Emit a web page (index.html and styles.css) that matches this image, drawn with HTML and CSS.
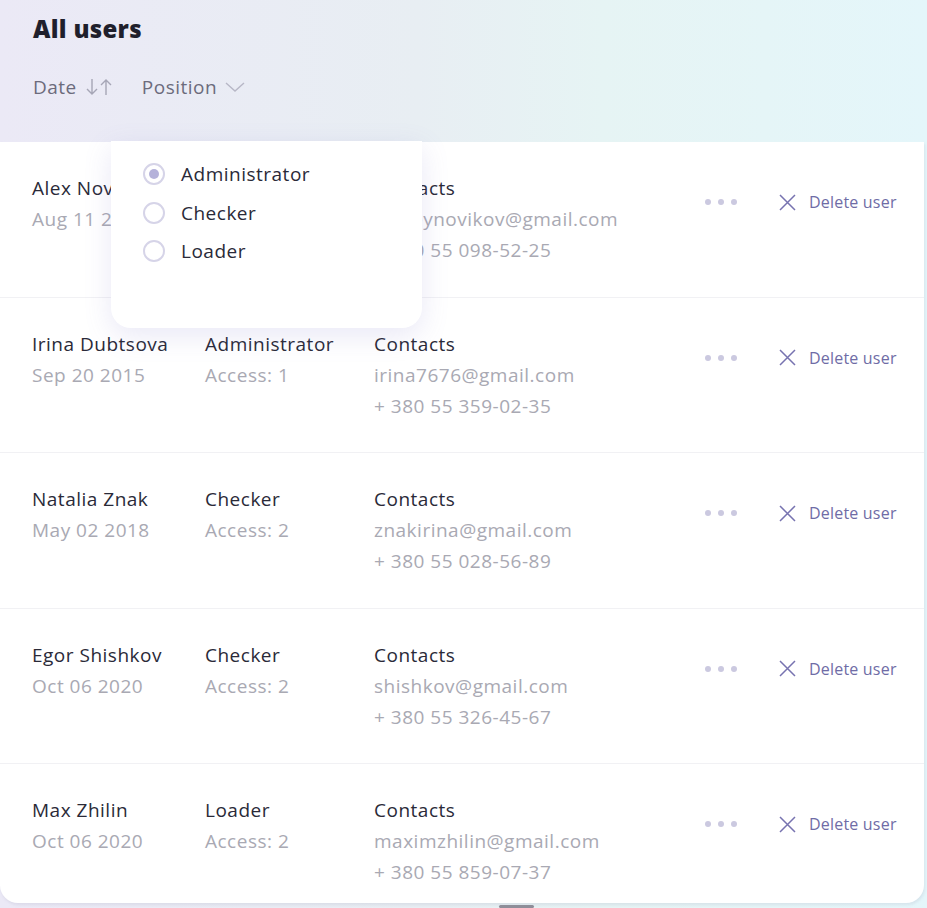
FILE: index.html
```html
<!DOCTYPE html>
<html>
<head>
<meta charset="utf-8">
<link rel="stylesheet" href="styles.css">
</head>
<body>
<div class="page">
  <header class="head">
    <h1 class="title">All users</h1>
    <div class="filters">
      <span class="filter">Date
        <svg class="sort" width="28" height="20" viewBox="0 0 28 20"><path d="M7 2v15M2 12l5 5 5-5" fill="none" stroke="#a6a6b6" stroke-width="1.4"/><path d="M21 18V3M16 8l5-5 5 5" fill="none" stroke="#a6a6b6" stroke-width="1.4"/></svg>
      </span>
      <span class="filter">Position
        <svg class="chev" width="20" height="12" viewBox="0 0 20 12"><path d="M1 2l9 8 9-8" fill="none" stroke="#b7b7c6" stroke-width="1.4"/></svg>
      </span>
    </div>
  </header>

  <div class="list">
    <div class="row">
      <div class="col c-name"><div class="main">Alex Novikov</div><div class="sub">Aug 11 2019</div></div>
      <div class="col c-pos"><div class="main">Administrator</div><div class="sub">Access: 1</div></div>
      <div class="col c-con"><div class="main">Contacts</div><div class="sub">alexeynovikov@gmail.com</div><div class="sub">+ 380 55 098-52-25</div></div>
      <div class="actions"><span class="dots"><i></i><i></i><i></i></span><span class="del"><svg width="17" height="17" viewBox="0 0 17 17"><path d="M1 1l15 15M16 1L1 16" stroke="#7773b0" stroke-width="1.5"/></svg>Delete user</span></div>
    </div>
    <div class="row">
      <div class="col c-name"><div class="main">Irina Dubtsova</div><div class="sub">Sep 20 2015</div></div>
      <div class="col c-pos"><div class="main">Administrator</div><div class="sub">Access: 1</div></div>
      <div class="col c-con"><div class="main">Contacts</div><div class="sub">irina7676@gmail.com</div><div class="sub">+ 380 55 359-02-35</div></div>
      <div class="actions"><span class="dots"><i></i><i></i><i></i></span><span class="del"><svg width="17" height="17" viewBox="0 0 17 17"><path d="M1 1l15 15M16 1L1 16" stroke="#7773b0" stroke-width="1.5"/></svg>Delete user</span></div>
    </div>
    <div class="row">
      <div class="col c-name"><div class="main">Natalia Znak</div><div class="sub">May 02 2018</div></div>
      <div class="col c-pos"><div class="main">Checker</div><div class="sub">Access: 2</div></div>
      <div class="col c-con"><div class="main">Contacts</div><div class="sub">znakirina@gmail.com</div><div class="sub">+ 380 55 028-56-89</div></div>
      <div class="actions"><span class="dots"><i></i><i></i><i></i></span><span class="del"><svg width="17" height="17" viewBox="0 0 17 17"><path d="M1 1l15 15M16 1L1 16" stroke="#7773b0" stroke-width="1.5"/></svg>Delete user</span></div>
    </div>
    <div class="row">
      <div class="col c-name"><div class="main">Egor Shishkov</div><div class="sub">Oct 06 2020</div></div>
      <div class="col c-pos"><div class="main">Checker</div><div class="sub">Access: 2</div></div>
      <div class="col c-con"><div class="main">Contacts</div><div class="sub">shishkov@gmail.com</div><div class="sub">+ 380 55 326-45-67</div></div>
      <div class="actions"><span class="dots"><i></i><i></i><i></i></span><span class="del"><svg width="17" height="17" viewBox="0 0 17 17"><path d="M1 1l15 15M16 1L1 16" stroke="#7773b0" stroke-width="1.5"/></svg>Delete user</span></div>
    </div>
    <div class="row last">
      <div class="col c-name"><div class="main">Max Zhilin</div><div class="sub">Oct 06 2020</div></div>
      <div class="col c-pos"><div class="main">Loader</div><div class="sub">Access: 2</div></div>
      <div class="col c-con"><div class="main">Contacts</div><div class="sub">maximzhilin@gmail.com</div><div class="sub">+ 380 55 859-07-37</div></div>
      <div class="actions"><span class="dots"><i></i><i></i><i></i></span><span class="del"><svg width="17" height="17" viewBox="0 0 17 17"><path d="M1 1l15 15M16 1L1 16" stroke="#7773b0" stroke-width="1.5"/></svg>Delete user</span></div>
    </div>
  </div>

  <div class="dropdown">
    <label class="opt"><span class="radio on"></span>Administrator</label>
    <label class="opt"><span class="radio"></span>Checker</label>
    <label class="opt"><span class="radio"></span>Loader</label>
  </div>
  <div class="handle"></div>
</div>
</body>
</html>
```

FILE: styles.css
```css
* { box-sizing: border-box; }
html, body { margin: 0; padding: 0; }
body {
  font-family: "Open Sans", "Noto Sans", sans-serif;
  background: #ecebf2;
  width: 927px;
  height: 908px;
  overflow: hidden;
}
.page {
  position: relative;
  height: 908px;
  background: linear-gradient(90deg, #ebe9f6 0%, #e8eef3 45%, #e6f4f4 65%, #e4f6fa 100%);
}
.head {
  height: 142px;
  padding: 14px 0 0 33px;
}
.title {
  margin: 0;
  font-size: 24px;
  font-weight: 800;
  color: #1f1f2c;
  line-height: 30px;
  letter-spacing: 0.3px;
}
.filters {
  display: flex;
  gap: 29px;
  margin-top: 28px;
}
.filter {
  display: flex;
  align-items: center;
  gap: 8px;
  font-size: 19px;
  letter-spacing: 0.5px;
  color: #6c6b7c;
  line-height: 30px;
}
.list {
  background: #fff;
  margin-right: 3px;
  border-radius: 0 0 18px 18px;
  box-shadow: 1px 2px 3px rgba(150,150,180,0.18);
  height: 761px;
  overflow: hidden;
}
.row {
  height: 155.5px;
  display: flex;
  align-items: flex-start;
  padding: 31px 0 0 32px;
  border-bottom: 1px solid #f1f1f4;
}
.row.last { border-bottom: 0; }
.col { line-height: 31px; font-size: 19px; letter-spacing: 0.5px; }
.c-name { width: 173px; }
.c-pos { width: 169px; }
.c-con { width: 320px; }
.main { color: #2a2a38; }
.sub { color: #a9a9b3; }
.actions {
  display: flex;
  align-items: center;
  margin-top: 16px;
  height: 26px;
}
.dots { display: flex; gap: 7px; margin-left: 11px; }
.dots i { width: 6px; height: 6px; border-radius: 50%; background: #cbc9e0; display: block; }
.del {
  display: flex;
  align-items: center;
  gap: 13px;
  margin-left: 42px;
  font-size: 16px;
  letter-spacing: 0.2px;
  color: #6f6ca6;
}
.dropdown {
  position: absolute;
  left: 111px;
  top: 141px;
  width: 311px;
  height: 187px;
  background: #fff;
  border-radius: 0 0 20px 20px;
  box-shadow: 0 8px 28px rgba(120, 110, 200, 0.16);
  padding: 14px 0 0 32px;
}
.opt {
  display: flex;
  align-items: center;
  gap: 16px;
  height: 38.5px;
  font-size: 19px;
  letter-spacing: 0.5px;
  color: #2a2a38;
}
.radio {
  width: 22px;
  height: 22px;
  border: 2px solid #d6d4e8;
  border-radius: 50%;
  display: flex;
  align-items: center;
  justify-content: center;
}
.radio.on::after {
  content: "";
  width: 10px;
  height: 10px;
  border-radius: 50%;
  background: #b5b2da;
}
.handle {
  position: absolute;
  left: 499px;
  top: 905px;
  width: 35px;
  height: 3px;
  border-radius: 2px;
  background: #8e8e99;
}
```
